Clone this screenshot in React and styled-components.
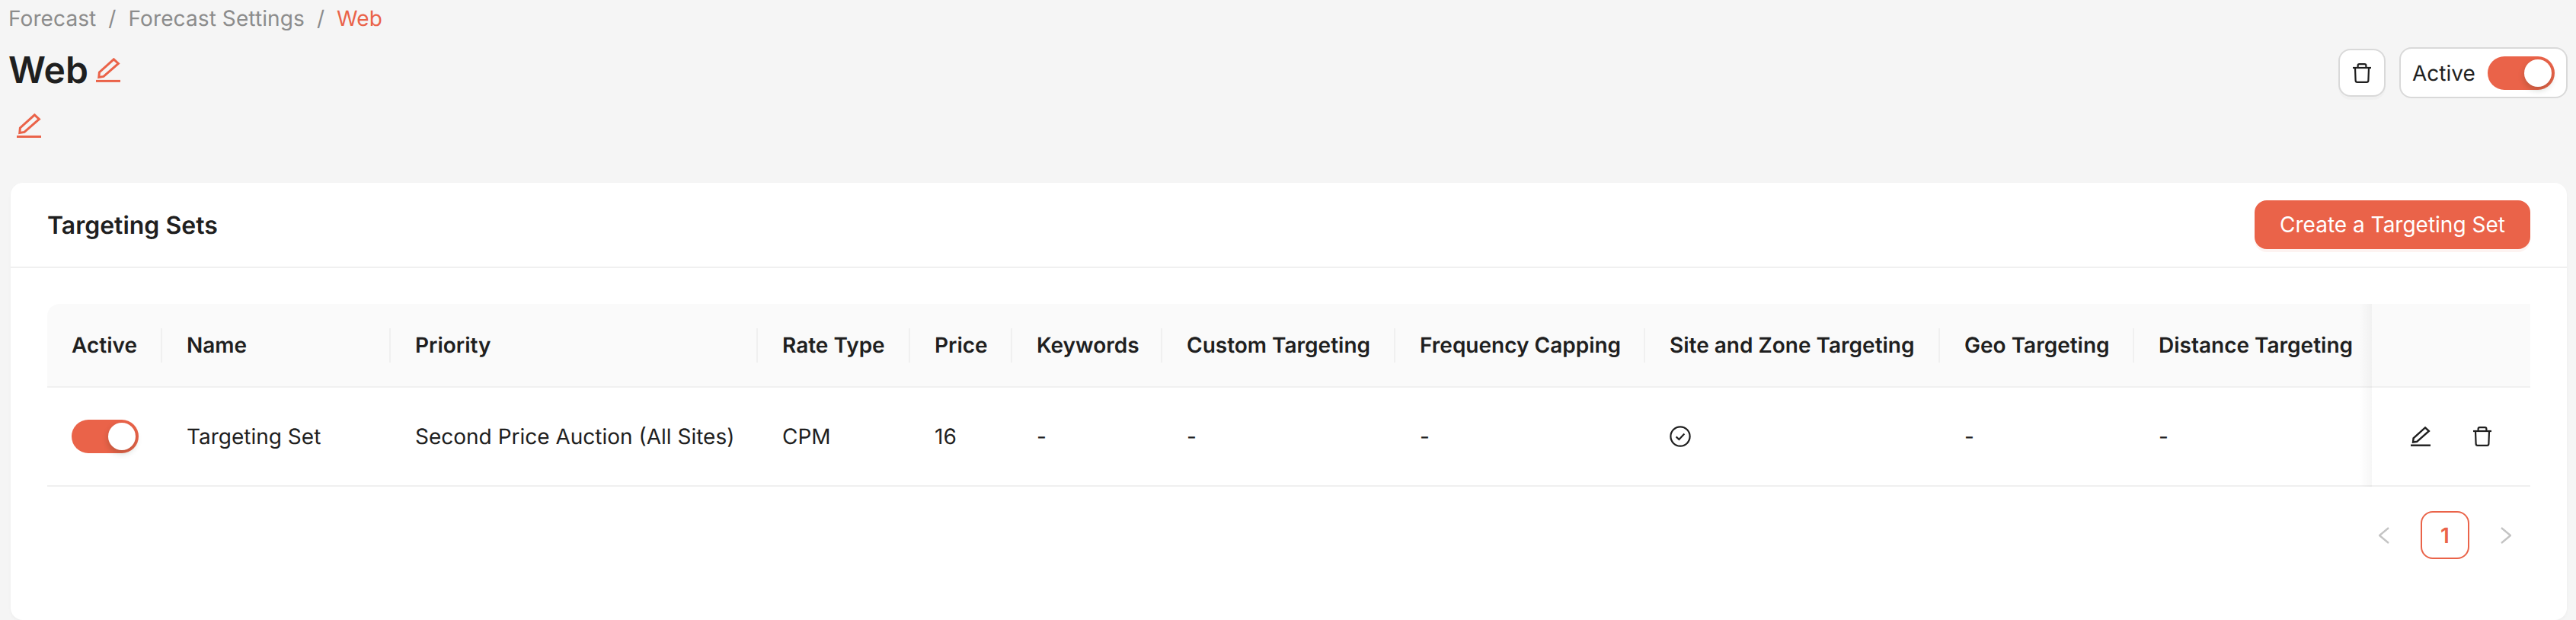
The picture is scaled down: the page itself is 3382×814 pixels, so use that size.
import React from 'react';
import styled, { createGlobalStyle } from 'styled-components';

const CORAL = '#ea6349';
const INK = '#1f1f1f';

const GlobalStyle = createGlobalStyle`
  html, body {
    margin: 0;
    padding: 0;
    background: #f5f5f5;
  }
  body {
    font-family: Inter, "Liberation Sans", sans-serif;
    color: ${INK};
    overflow: hidden;
    text-rendering: geometricPrecision;
  }
`;

const Page = styled.div`
  height: 814px;
  padding: 2px 11px 0 11px;
  box-sizing: border-box;
  overflow: hidden;
`;

const TopBar = styled.div`
  display: flex;
  justify-content: space-between;
  align-items: flex-start;
`;

const Breadcrumb = styled.div`
  display: flex;
  gap: 16px;
  font-size: 28px;
  line-height: 44px;
  letter-spacing: 0.1px;
  color: #8c8c8c;
`;

const Crumb = styled.span`
  color: ${(p) => (p.$current ? CORAL : '#8c8c8c')};
`;

const TitleRow = styled.div`
  display: flex;
  align-items: center;
  gap: 10px;
  margin-top: 14px;
  height: 64px;
`;

const Title = styled.h1`
  margin: 0;
  font-size: 48px;
  font-weight: 600;
  line-height: 64px;
`;

const DescRow = styled.div`
  display: flex;
  margin-top: 25px;
  padding-left: 11px;
  height: 32px;
`;

const Actions = styled.div`
  display: flex;
  align-items: center;
  gap: 18px;
  margin-top: 60px;
`;

const IconButton = styled.button`
  display: flex;
  align-items: center;
  justify-content: center;
  width: 62px;
  height: 63px;
  padding: 0;
  background: #fff;
  border: 2px solid #d9d9d9;
  border-radius: 16px;
  box-shadow: 0 4px 0 rgba(0, 0, 0, 0.02);
  box-sizing: border-box;
`;

const ActiveBox = styled.div`
  display: flex;
  align-items: center;
  justify-content: space-between;
  width: 221px;
  height: 67px;
  padding: 0 15px 0 15px;
  background: #fff;
  border: 2px solid #d9d9d9;
  border-radius: 16px;
  box-sizing: border-box;
  font-size: 28px;
`;

const Track = styled.span`
  position: relative;
  display: inline-block;
  width: 88px;
  height: 44px;
  border-radius: 22px;
  background: ${CORAL};
`;

const Knob = styled.span`
  position: absolute;
  top: 4px;
  right: 4px;
  width: 36px;
  height: 36px;
  border-radius: 50%;
  background: #fff;
  box-shadow: 0 4px 8px rgba(0, 35, 11, 0.2);
`;

const Card = styled.section`
  margin: 59px 1px 0 3px;
  height: 574px;
  background: #fff;
  border-radius: 16px;
  box-shadow: 0 2px 4px rgba(0, 0, 0, 0.03);
`;

const CardHead = styled.div`
  display: flex;
  align-items: center;
  justify-content: space-between;
  height: 112px;
  padding: 0 48px;
  border-bottom: 2px solid #f0f0f0;
  box-sizing: border-box;
`;

const CardTitle = styled.h2`
  margin: 0;
  font-size: 32px;
  font-weight: 600;
`;

const PrimaryButton = styled.button`
  width: 362px;
  height: 64px;
  padding: 0;
  border: 0;
  border-radius: 16px;
  background: ${CORAL};
  box-shadow: 0 4px 0 rgba(234, 99, 73, 0.08);
  color: #fff;
  font-family: inherit;
  font-size: 28px;
`;

const CardBody = styled.div`
  padding: 47px 48px 0;
`;

const Table = styled.table`
  width: 3260px;
  table-layout: fixed;
  border-collapse: separate;
  border-spacing: 0;
`;

const Th = styled.th`
  position: relative;
  height: 110px;
  padding: 0 0 0 32px;
  background: #fafafa;
  border-bottom: 2px solid #f0f0f0;
  box-sizing: border-box;
  font-size: 28px;
  font-weight: 600;
  text-align: left;
  white-space: nowrap;

  &:first-child {
    border-top-left-radius: 16px;
  }

  &:not(:nth-last-child(-n + 2))::before {
    content: '';
    position: absolute;
    top: 32px;
    right: 0;
    width: 2px;
    height: 45px;
    background: #f0f0f0;
  }
`;

const Td = styled.td`
  position: relative;
  height: 130px;
  padding: 0 0 0 32px;
  border-bottom: 2px solid #f0f0f0;
  box-sizing: border-box;
  font-size: 28px;
  white-space: nowrap;
`;

const fixedEdge = `
  &::after {
    content: '';
    position: absolute;
    top: 0;
    bottom: -2px;
    left: -16px;
    width: 16px;
    background: linear-gradient(to right, rgba(5, 5, 5, 0), rgba(5, 5, 5, 0.035));
  }
`;

const FixedTh = styled(Th)`
  ${fixedEdge}
`;

const FixedTd = styled(Td)`
  padding: 0;
  ${fixedEdge}
`;

const RowActions = styled.div`
  display: flex;
  align-items: center;
  gap: 56px;
  padding-left: 51px;
`;

const Cell = styled.span`
  display: flex;
  align-items: center;
`;

const Pager = styled.div`
  display: flex;
  justify-content: flex-end;
  gap: 16px;
  margin-top: 32px;
`;

const PagerArrow = styled.span`
  display: flex;
  align-items: center;
  justify-content: center;
  width: 64px;
  height: 63px;
`;

const PagerItem = styled.span`
  display: flex;
  align-items: center;
  justify-content: center;
  width: 64px;
  height: 63px;
  border: 2px solid ${CORAL};
  border-radius: 16px;
  box-sizing: border-box;
  color: ${CORAL};
  font-size: 28px;
  font-weight: 600;
`;

const PencilIcon = ({ size = 32, color = CORAL }) => (
  <svg width={size} height={size} viewBox="0 0 32 32" fill="none">
    <path
      d="M23.4 1.8 29.4 7.4 10 24.4 3.8 25.4 4.4 19Z"
      stroke={color}
      strokeWidth="3"
      strokeLinejoin="miter"
    />
    <path d="M0 30.4H32" stroke={color} strokeWidth="3" />
  </svg>
);

const TrashIcon = () => (
  <svg width="24" height="26" viewBox="0 0 24 26" fill="none" stroke={INK} strokeWidth="2.2">
    <path d="M0 6H24" />
    <path d="M3 6 3.6 22.6C3.7 24 4.4 24.8 5.8 24.8H18.2C19.6 24.8 20.3 24 20.4 22.6L21 6" />
    <path d="M6.6 6V3.2C6.6 2 7.4 1.2 8.6 1.2H15.4C16.6 1.2 17.4 2 17.4 3.2V6" />
  </svg>
);

const CheckCircleIcon = () => (
  <svg width="28" height="28" viewBox="0 0 28 28" fill="none" stroke={INK} strokeWidth="2.2">
    <circle cx="14" cy="14" r="12.6" />
    <path d="M8.6 14.4 12.4 18 19.4 10.4" />
  </svg>
);

const ChevronIcon = ({ flip }) => (
  <svg width="14" height="22" viewBox="0 0 14 22" fill="none" stroke="#c4c4c4" strokeWidth="2.4">
    <path d={flip ? 'M1 1 13 11 1 21' : 'M13 1 1 11 13 21'} />
  </svg>
);

const Switch = () => (
  <Track>
    <Knob />
  </Track>
);

const columns = [
  ['Active', 151],
  ['Name', 300],
  ['Priority', 482],
  ['Rate Type', 200],
  ['Price', 134],
  ['Keywords', 197],
  ['Custom Targeting', 306],
  ['Frequency Capping', 328],
  ['Site and Zone Targeting', 387],
  ['Geo Targeting', 255],
  ['Distance Targeting', 312],
];

export default function App() {
  return (
    <>
      <GlobalStyle />
      <Page>
        <TopBar>
          <div>
            <Breadcrumb>
              <Crumb>Forecast</Crumb>
              <span>/</span>
              <Crumb>Forecast Settings</Crumb>
              <span>/</span>
              <Crumb $current>Web</Crumb>
            </Breadcrumb>
            <TitleRow>
              <Title>Web</Title>
              <PencilIcon />
            </TitleRow>
            <DescRow>
              <PencilIcon />
            </DescRow>
          </div>
          <Actions>
            <IconButton>
              <TrashIcon />
            </IconButton>
            <ActiveBox>
              Active
              <Switch />
            </ActiveBox>
          </Actions>
        </TopBar>

        <Card>
          <CardHead>
            <CardTitle>Targeting Sets</CardTitle>
            <PrimaryButton>Create a Targeting Set</PrimaryButton>
          </CardHead>
          <CardBody>
            <Table>
              <colgroup>
                {columns.map(([name, width]) => (
                  <col key={name} width={width} />
                ))}
                <col width={208} />
              </colgroup>
              <thead>
                <tr>
                  {columns.map(([name]) => (
                    <Th key={name}>{name}</Th>
                  ))}
                  <FixedTh />
                </tr>
              </thead>
              <tbody>
                <tr>
                  <Td>
                    <Cell>
                      <Switch />
                    </Cell>
                  </Td>
                  <Td>Targeting Set</Td>
                  <Td>Second Price Auction (All Sites)</Td>
                  <Td>CPM</Td>
                  <Td>16</Td>
                  <Td>-</Td>
                  <Td>-</Td>
                  <Td>-</Td>
                  <Td>
                    <Cell>
                      <CheckCircleIcon />
                    </Cell>
                  </Td>
                  <Td>-</Td>
                  <Td>-</Td>
                  <FixedTd>
                    <RowActions>
                      <PencilIcon size={26} color={INK} />
                      <TrashIcon />
                    </RowActions>
                  </FixedTd>
                </tr>
              </tbody>
            </Table>
            <Pager>
              <PagerArrow>
                <ChevronIcon />
              </PagerArrow>
              <PagerItem>1</PagerItem>
              <PagerArrow>
                <ChevronIcon flip />
              </PagerArrow>
            </Pager>
          </CardBody>
        </Card>
      </Page>
    </>
  );
}
